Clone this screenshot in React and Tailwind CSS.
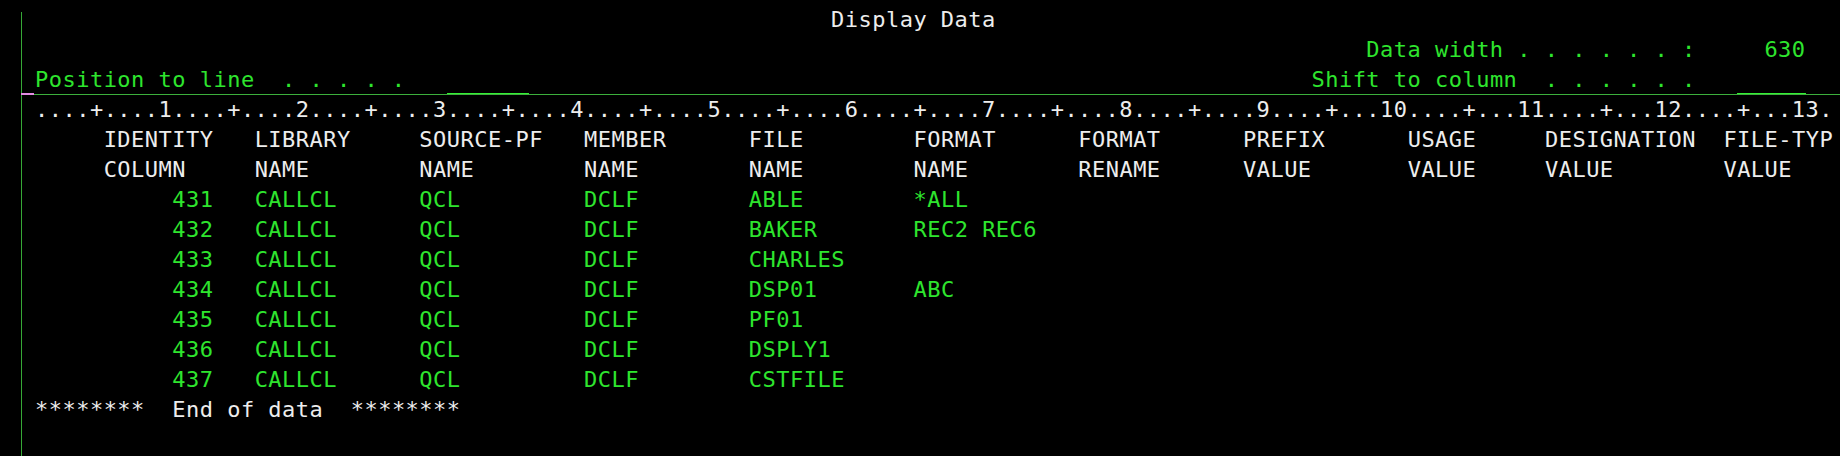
import React from "react";

const GREEN = "text-[#2ee52e]";
const WHITE = "text-[#ededed]";

// place text segments on a 132-column line
function pad(segs) {
  let col = 0;
  const out = [];
  segs.forEach(([at, text, cls], i) => {
    if (at > col) out.push(<span key={"s" + i}>{" ".repeat(at - col)}</span>);
    out.push(
      <span key={i} className={cls}>
        {text}
      </span>
    );
    col = Math.max(col, at) + text.length;
  });
  return out;
}

function Line({ segs, children }) {
  return <div className="h-[30px] leading-[30px] whitespace-pre">{segs ? pad(segs) : children}</div>;
}

const ruler =
  "....+....1....+....2....+....3....+....4....+....5....+....6....+....7....+....8....+....9....+...10....+...11....+...12....+...13.";

const cols = [5, 16, 28, 40, 52, 64, 76, 88, 100, 110, 123];
const head1 = ["IDENTITY", "LIBRARY", "SOURCE-PF", "MEMBER", "FILE", "FORMAT", "FORMAT", "PREFIX", "USAGE", "DESIGNATION", "FILE-TYP"];
const head2 = ["COLUMN", "NAME", "NAME", "NAME", "NAME", "NAME", "RENAME", "VALUE", "VALUE", "VALUE", "VALUE"];

const rows = [
  { id: "431", file: "ABLE", fmt: "*ALL" },
  { id: "432", file: "BAKER", fmt: "REC2 REC6" },
  { id: "433", file: "CHARLES", fmt: "" },
  { id: "434", file: "DSP01", fmt: "ABC" },
  { id: "435", file: "PF01", fmt: "" },
  { id: "436", file: "DSPLY1", fmt: "" },
  { id: "437", file: "CSTFILE", fmt: "" },
];

function Field({ width }) {
  return (
    <span className="inline-block box-border h-[30px] align-top border-b-2 border-[#35f035]">
      {" ".repeat(width)}
    </span>
  );
}

export default function App() {
  return (
    <div className="w-[1840px] h-[456px] bg-black overflow-hidden flex pl-[21px] font-['DejaVu_Sans_Mono',monospace] text-[22px] tracking-[0.48px]">
      <div className="w-px mt-[12px] bg-[#36a836]" />
      <div className="flex-1 pl-[13px] pt-[5px]">
        <Line segs={[[58, "Display Data", WHITE]]} />
        <Line segs={[[97, "Data width . . . . . . :", GREEN], [126, "630", GREEN]]} />
        <Line>
          <span className={GREEN}>{"Position to line  . . . . ."}</span>
          <span>{"   "}</span>
          <Field width={6} />
          <span>{" ".repeat(57)}</span>
          <span className={GREEN}>{"Shift to column  . . . . . ."}</span>
          <span>{"   "}</span>
          <Field width={5} />
        </Line>
        <div className="flex items-start h-[2px] -mt-[2px] -ml-[14px]">
          <div className="w-[13px] h-[2px] bg-[#e48ce4]" />
          <div className="flex-1 h-px mt-px bg-[#3cb03c]" />
        </div>
        <Line segs={[[0, ruler, WHITE]]} />
        <Line segs={head1.map((h, i) => [cols[i], h, WHITE])} />
        <Line segs={head2.map((h, i) => [cols[i], h, WHITE])} />
        {rows.map((r) => (
          <Line
            key={r.id}
            segs={[
              [10, r.id, GREEN],
              [16, "CALLCL", GREEN],
              [28, "QCL", GREEN],
              [40, "DCLF", GREEN],
              [52, r.file, GREEN],
              [64, r.fmt, GREEN],
            ]}
          />
        ))}
        <Line segs={[[0, "********", WHITE], [10, "End of data", WHITE], [23, "********", WHITE]]} />
      </div>
    </div>
  );
}
